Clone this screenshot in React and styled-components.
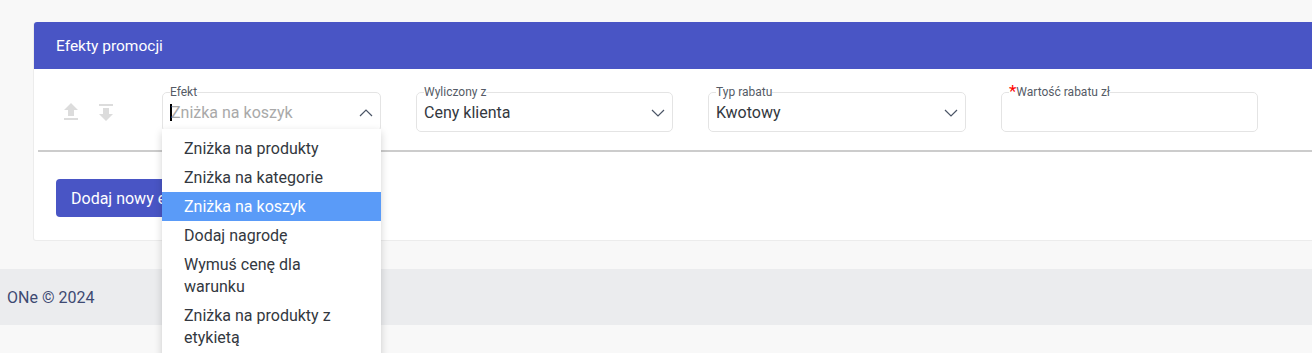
import styled, { createGlobalStyle } from "styled-components";

const GlobalStyle = createGlobalStyle`
    html {
        overflow: hidden;
    }
    body {
        margin: 0;
        padding: 0;
        background: #f8f8f8;
        font-family: Roboto, "Liberation Sans", sans-serif;
    }
`

const Shell = styled.div`
    min-height: 100vh;
`

const Page = styled.div`
    padding: 22px 0 0 33px;
`

const Card = styled.section`
    width: 1320px;
    background: #fff;
    border: 1px solid #ececec;
    border-top: none;
    border-radius: 3px;
`

const CardHeader = styled.header`
    height: 47px;
    display: flex;
    align-items: center;
    padding-left: 22px;
    background: #4955c5;
    color: #fff;
    font-size: 15.5px;
    border-radius: 3px 3px 0 0;
`

const EffectRow = styled.div`
    display: flex;
    align-items: flex-start;
    height: 83px;
    box-sizing: border-box;
    margin-left: 4px;
    padding: 16px 0 0 21px;
    border-bottom: 2px solid #cccccc;
`

const MoveButtons = styled.div`
    display: flex;
    gap: 11px;
    margin-top: 15px;
    margin-right: 44px;
`

const Fields = styled.div`
    display: flex;
    gap: 35px;
`

const Field = styled.fieldset`
    position: relative;
    width: ${p => p.$width}px;
    box-sizing: border-box;
    margin: 0;
    padding: 0 7px;
    border: 1px solid #e4e4e4;
    border-radius: 5px;
    min-width: 0;
`

const Label = styled.legend`
    padding: 0;
    margin-left: 0;
    font-size: 12px;
    line-height: 14px;
    color: #555b66;
    background: #fff;
`

const Required = styled.span`
    color: #ff0000;
    font-size: 17px;
    line-height: 10px;
    vertical-align: top;
    position: relative;
    top: 1px;
`

const Control = styled.div`
    display: flex;
    align-items: center;
    justify-content: space-between;
    height: ${p => p.$height || 30}px;
    padding-bottom: 3px;
    box-sizing: border-box;
`

const Value = styled.span`
    font-size: 16px;
    line-height: 19px;
    color: ${p => (p.$placeholder ? "#a9a9a9" : "#333840")};
    display: flex;
    align-items: center;
`

const Caret = styled.span`
    display: inline-block;
    width: 2px;
    height: 17px;
    background: #000;
    margin-right: -1px;
`

const Menu = styled.ul`
    position: absolute;
    top: calc(100% - 2px);
    left: -1px;
    right: -1px;
    margin: 0;
    padding: 5px 0 8px;
    list-style: none;
    background: #fff;
    box-shadow: 0 3px 8px rgba(0, 0, 0, 0.18);
    z-index: 10;
`

const MenuItem = styled.li`
    padding: 3.5px 22px;
    font-size: 16px;
    line-height: 22px;
    color: ${p => (p.$active ? "#fff" : "#333840")};
    background: ${p => (p.$active ? "#5a9bf8" : "transparent")};
`

const CardFooter = styled.div`
    padding: 27px 0 23px 22px;
`

const Button = styled.button`
    height: 38px;
    padding: 0 15px;
    border: none;
    border-radius: 4px;
    background: #4955c5;
    color: #fff;
    font-family: inherit;
    font-size: 16px;
`

const Footer = styled.footer`
    margin-top: 28px;
    height: 56px;
    display: flex;
    align-items: center;
    padding-left: 7px;
    background: #ebecee;
    color: #3e4a72;
    font-size: 16px;
`

const MoveIcon = ({ down }) => (
    <svg width="24" height="24" viewBox="0 0 24 24" fill="#dcdcdc">
        {down
            ? <path d="M5 4h14v2H5z M9 8h6v6h4l-7 7-7-7h4z" />
            : <path d="M9 16h6v-6h4l-7-7-7 7h4z M5 18h14v2H5z" />}
    </svg>
)

const Chevron = ({ up }) => (
    <svg width="14" height="8" viewBox="0 0 14 8" fill="none" stroke="#4b5566" strokeWidth="1.2">
        <polyline points={up ? "1,7 7,1 13,7" : "1,1 7,7 13,1"} />
    </svg>
)

const options = [
    "Zniżka na produkty",
    "Zniżka na kategorie",
    "Zniżka na koszyk",
    "Dodaj nagrodę",
    "Wymuś cenę dla warunku",
    "Zniżka na produkty z etykietą",
]

function App() {
    return (
        <Shell>
            <GlobalStyle />
            <Page>
                <Card>
                    <CardHeader>Efekty promocji</CardHeader>
                    <EffectRow>
                        <MoveButtons>
                            <MoveIcon />
                            <MoveIcon down />
                        </MoveButtons>
                        <Fields>
                            <Field $width={219}>
                                <Label>Efekt</Label>
                                <Control>
                                    <Value $placeholder><Caret />Zniżka na koszyk</Value>
                                    <Chevron up />
                                </Control>
                                <Menu>
                                    {options.map(o => (
                                        <MenuItem key={o} $active={o === "Zniżka na koszyk"}>{o}</MenuItem>
                                    ))}
                                </Menu>
                            </Field>
                            <Field $width={257}>
                                <Label>Wyliczony z</Label>
                                <Control>
                                    <Value>Ceny klienta</Value>
                                    <Chevron />
                                </Control>
                            </Field>
                            <Field $width={258}>
                                <Label>Typ rabatu</Label>
                                <Control>
                                    <Value>Kwotowy</Value>
                                    <Chevron />
                                </Control>
                            </Field>
                            <Field $width={257}>
                                <Label><Required>*</Required>Wartość rabatu zł</Label>
                                <Control $height={32} />
                            </Field>
                        </Fields>
                    </EffectRow>
                    <CardFooter>
                        <Button>Dodaj nowy efekt</Button>
                    </CardFooter>
                </Card>
            </Page>
            <Footer>ONe © 2024</Footer>
        </Shell>
    );
}

export default App;
